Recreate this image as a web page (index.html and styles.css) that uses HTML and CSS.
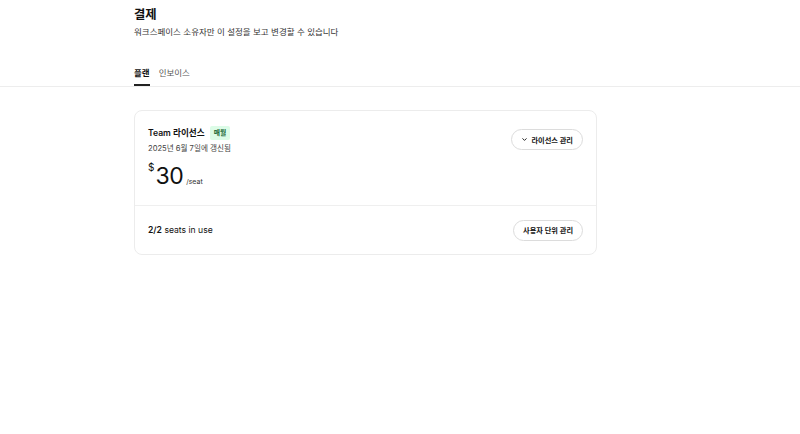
FILE: index.html
```html
<!DOCTYPE html>
<html lang="ko">
<head>
<meta charset="utf-8">
<title>결제</title>
<link rel="stylesheet" href="styles.css">
</head>
<body>
  <header class="page-head">
    <div class="wrap">
      <h1 class="title">결제</h1>
      <p class="subtitle">워크스페이스 소유자만 이 설정을 보고 변경할 수 있습니다</p>
      <nav class="tabs">
        <span class="tab active">플랜</span>
        <span class="tab">인보이스</span>
      </nav>
    </div>
  </header>
  <main class="wrap">
    <section class="card">
      <div class="row plan-row">
        <div class="plan-info">
          <div class="plan-name">Team 라이선스 <span class="badge">매월</span></div>
          <div class="renew">2025년 6월 7일에 갱신됨</div>
          <div class="price"><span class="cur">$</span><span class="amount">30</span><span class="unit">/seat</span></div>
        </div>
        <button class="btn btn-top">
          <svg class="chev" viewBox="0 0 10 10" width="7" height="7"><path d="M2.5 3.8 L5 6.3 L7.5 3.8" fill="none" stroke="#111" stroke-width="1.3" stroke-linecap="round" stroke-linejoin="round"/></svg>
          라이선스 관리
        </button>
      </div>
      <div class="row seats-row">
        <div class="seats"><b>2/2</b> seats in use</div>
        <button class="btn">사용자 단위 관리</button>
      </div>
    </section>
  </main>
</body>
</html>
```

FILE: styles.css
```css
* { box-sizing: border-box; }
html, body {
  margin: 0;
  padding: 0;
  background: #fff;
  color: #111;
  font-family: Inter, "Noto Sans CJK KR", sans-serif;
}
.wrap {
  margin-left: 134px;
  width: 463px;
}
.page-head {
  padding-top: 7px;
  border-bottom: 1px solid #ededed;
}
.title {
  margin: 0;
  font-size: 12.3px;
  line-height: 16px;
  font-weight: 700;
  color: #111;
}
.subtitle {
  margin: 3px 0 0;
  font-size: 8.5px;
  line-height: 12px;
  color: #333;
}
.tabs {
  display: flex;
  gap: 9px;
  margin-top: 29px;
}
.tab {
  font-size: 8.5px;
  line-height: 12px;
  padding-bottom: 5px;
  color: #555;
  border-bottom: 2px solid transparent;
}
.tab.active {
  font-weight: 700;
  color: #111;
  border-bottom-color: #222;
}
.card {
  margin-top: 23px;
  border: 1px solid #ececec;
  border-radius: 8px;
  background: #fff;
}
.row {
  display: flex;
  justify-content: space-between;
  padding: 0 13px;
}
.plan-row {
  padding-top: 15px;
  padding-bottom: 15px;
  border-bottom: 1px solid #efefef;
  align-items: flex-start;
}
.plan-name {
  display: flex;
  align-items: center;
  gap: 5px;
  font-size: 8.6px;
  font-weight: 600;
  line-height: 14px;
}
.badge {
  background: #dcfce7;
  color: #166534;
  font-size: 6.8px;
  font-weight: 600;
  line-height: 14px;
  padding: 0 4px;
  border-radius: 2px;
}
.renew {
  margin-top: 3px;
  font-size: 7.6px;
  line-height: 12px;
  color: #444;
}
.price {
  margin-top: 7px;
  line-height: 28px;
  height: 28px;
  white-space: nowrap;
}
.cur {
  font-size: 10px;
  line-height: 1;
  vertical-align: top;
  margin-right: 1px;
}
.amount {
  font-size: 23px;
  font-weight: 400;
  letter-spacing: -0.5px;
}
.unit {
  font-size: 7px;
  line-height: 1;
  color: #333;
  margin-left: 3px;
}
.btn {
  display: inline-flex;
  align-items: center;
  gap: 4px;
  height: 21px;
  padding: 0 9px;
  border: 1px solid #dcdcdc;
  border-radius: 999px;
  background: #fff;
  font-family: Inter, "Noto Sans CJK KR", sans-serif;
  font-size: 7.2px;
  font-weight: 600;
  color: #111;
  cursor: pointer;
}
.btn-top {
  margin-top: 3px;
}
.chev {
  display: block;
}
.seats-row {
  height: 48px;
  align-items: center;
}
.seats {
  font-size: 8.6px;
  color: #111;
}
.seats b {
  font-weight: 600;
}
```
